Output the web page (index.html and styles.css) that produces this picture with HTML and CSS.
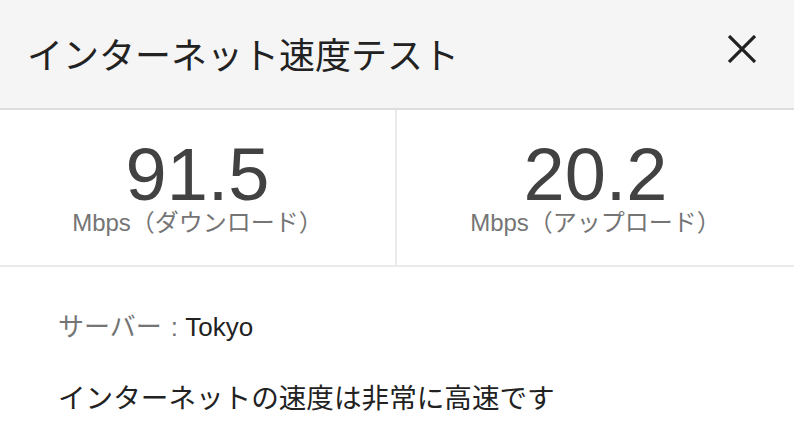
FILE: index.html
```html
<!DOCTYPE html>
<html lang="ja">
<head>
<meta charset="utf-8">
<title>インターネット速度テスト</title>
<link rel="stylesheet" href="styles.css">
</head>
<body>
<div class="card">
  <header class="header">
    <h1 class="title">インターネット速度テスト</h1>
    <button class="close" aria-label="閉じる">
      <svg width="28" height="28" viewBox="0 0 28 28"><path d="M1 1L27 27M27 1L1 27" stroke="#212121" stroke-width="3.2" fill="none"/></svg>
    </button>
  </header>
  <section class="stats">
    <div class="stat stat-left">
      <div class="num">91.5</div>
      <div class="unit">Mbps（ダウンロード）</div>
    </div>
    <div class="stat">
      <div class="num">20.2</div>
      <div class="unit">Mbps（アップロード）</div>
    </div>
  </section>
  <section class="info">
    <p class="server"><span class="label">サーバー<span class="colon">:</span></span> <span class="value">Tokyo</span></p>
    <p class="summary">インターネットの速度は非常に高速です</p>
  </section>
</div>
</body>
</html>
```
FILE: styles.css
```css
html, body {
  margin: 0;
  padding: 0;
  background: #ffffff;
}
body {
  font-family: "Liberation Sans", "Noto Sans CJK JP", sans-serif;
  color: #222222;
}
.card {
  width: 794px;
  height: 448px;
  overflow: hidden;
}
.header {
  height: 108px;
  background: #f5f5f5;
  border-bottom: 2px solid #dddddd;
  display: flex;
  justify-content: space-between;
  align-items: flex-start;
}
.title {
  margin: 39px 0 0 27px;
  font-size: 36px;
  line-height: 36px;
  font-weight: normal;
  color: #222222;
}
.close {
  margin: 35px 38px 0 0;
  padding: 0;
  border: 0;
  background: none;
  width: 28px;
  height: 28px;
  display: block;
}
.close svg {
  display: block;
}
.stats {
  display: grid;
  grid-template-columns: 397px 1fr;
  border-bottom: 2px solid #ebebeb;
  height: 155px;
}
.stat {
  text-align: center;
  padding-top: 35px;
}
.stat-left {
  border-right: 2px solid #ebebeb;
}
.num {
  font-size: 74px;
  line-height: 60px;
  color: #424242;
}
.unit {
  margin-top: 6px;
  font-size: 24px;
  line-height: 24px;
  color: #757575;
}
.info {
  padding: 47px 0 0 58px;
}
.server {
  margin: 0;
  font-size: 26px;
  line-height: 26px;
}
.label {
  color: #757575;
}
.colon {
  margin-left: 9px;
}
.value {
  color: #222222;
}
.summary {
  margin: 45px 0 0 0;
  font-size: 27.6px;
  line-height: 28px;
  color: #222222;
}
```
